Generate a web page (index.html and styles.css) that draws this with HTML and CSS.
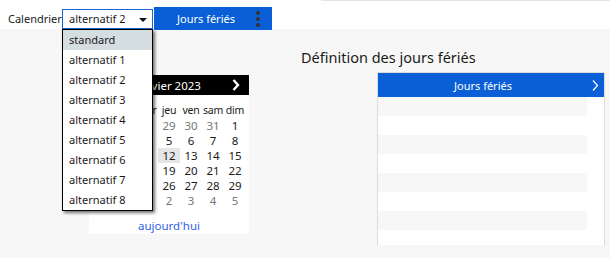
FILE: index.html
```html
<!DOCTYPE html>
<html lang="fr">
<head>
    <meta charset="UTF-8">
    <title>Jours fériés</title>
    <link rel="stylesheet" href="styles.css">
</head>
<body>
    <header class="toolbar">
        <label class="toolbar-label">Calendrier</label>
        <div class="select">
            <span class="select-value">alternatif 2</span>
            <span class="select-arrow"></span>
            <ul class="select-list">
                <li class="selected">standard</li>
                <li>alternatif 1</li>
                <li>alternatif 2</li>
                <li>alternatif 3</li>
                <li>alternatif 4</li>
                <li>alternatif 5</li>
                <li>alternatif 6</li>
                <li>alternatif 7</li>
                <li>alternatif 8</li>
            </ul>
        </div>
        <button class="toolbar-btn">
            <span class="toolbar-btn-text">Jours fériés</span>
            <span class="dots"><i></i><i></i><i></i></span>
        </button>
        <div class="toolbar-rule"></div>
    </header>

    <main class="main">
        <!-- calendrier -->
        <section class="calendar">
            <div class="calendar-head">
                <svg class="chev" width="8" height="12" viewBox="0 0 8 12"><polyline points="6.5,1 2,6 6.5,11" fill="none" stroke="#fff" stroke-width="2.4"/></svg>
                <span class="month">janvier 2023</span>
                <svg class="chev" width="8" height="12" viewBox="0 0 8 12"><polyline points="1.5,1 6,6 1.5,11" fill="none" stroke="#fff" stroke-width="2.4"/></svg>
            </div>
            <div class="calendar-grid">
                <span class="dn">lun</span><span class="dn">mar</span><span class="dn">mer</span><span class="dn">jeu</span><span class="dn">ven</span><span class="dn">sam</span><span class="dn">dim</span>
                <span class="out">26</span><span class="out">27</span><span class="out">28</span><span class="out">29</span><span class="out">30</span><span class="out">31</span><span>1</span>
                <span>2</span><span>3</span><span>4</span><span>5</span><span>6</span><span>7</span><span>8</span>
                <span>9</span><span>10</span><span>11</span><span class="today">12</span><span>13</span><span>14</span><span>15</span>
                <span>16</span><span>17</span><span>18</span><span>19</span><span>20</span><span>21</span><span>22</span>
                <span>23</span><span>24</span><span>25</span><span>26</span><span>27</span><span>28</span><span>29</span>
                <span>30</span><span>31</span><span class="out">1</span><span class="out">2</span><span class="out">3</span><span class="out">4</span><span class="out">5</span>
            </div>
            <a class="calendar-today" href="#">aujourd'hui</a>
        </section>

        <!-- définition des jours fériés -->
        <section class="holidays">
            <h1 class="holidays-title">Définition des jours fériés</h1>
            <div class="panel">
                <div class="panel-head">
                    <span>Jours fériés</span>
                    <svg class="panel-chev" width="7" height="11" viewBox="0 0 7 11"><polyline points="1,0.5 5.5,5.5 1,10.5" fill="none" stroke="#fff" stroke-width="1.2"/></svg>
                </div>
                <div class="panel-body">
                    <div class="row"></div>
                    <div class="row"></div>
                    <div class="row"></div>
                    <div class="row"></div>
                    <div class="row"></div>
                    <div class="row"></div>
                    <div class="row"></div>
                    <div class="row"></div>
                </div>
            </div>
        </section>
    </main>
</body>
</html>
```

FILE: styles.css
```css
body {
    margin: 0;
    background-color: #ffffff;
    font-family: "Noto Sans", "Open Sans", sans-serif;
    font-size: 11px;
    color: #1a1a1a;
}

/* barre du haut */
.toolbar {
    display: flex;
    align-items: flex-start;
    height: 29px;
    padding-left: 8px;
}

.toolbar-label {
    width: 54px;
    margin-top: 9px;
    line-height: 20px;
}

.select {
    position: relative;
    box-sizing: border-box;
    width: 91px;
    height: 20px;
    margin-top: 9px;
    border: 1px solid #1b62d4;
    padding-left: 6px;
    line-height: 18px;
}

.select-arrow {
    position: absolute;
    right: 5px;
    top: 8px;
    border-left: 4px solid transparent;
    border-right: 4px solid transparent;
    border-top: 4px solid #111111;
}

/* liste ouverte */
.select-list {
    position: absolute;
    left: -1px;
    top: 19px;
    z-index: 5;
    box-sizing: border-box;
    width: 91px;
    margin: 0;
    padding: 0;
    list-style: none;
    background-color: #ffffff;
    border: 1px solid #000000;
    box-shadow: 2px 2px 3px rgba(0, 0, 0, 0.55);
}

.select-list li {
    height: 20px;
    padding-left: 6px;
    line-height: 20px;
}

.select-list li.selected {
    background-color: #d4dde0;
}

.toolbar-btn {
    display: flex;
    align-items: center;
    box-sizing: border-box;
    width: 118px;
    height: 23px;
    margin: 7px 0 0 1px;
    padding: 0;
    border: none;
    background-color: #0a5fd6;
    color: #ffffff;
    font-family: inherit;
    font-size: 11px;
}

.toolbar-btn-text {
    flex: 1;
    text-align: center;
    padding-left: 2px;
}

.dots {
    display: flex;
    flex-direction: column;
    gap: 2px;
    width: 12px;
    margin-right: 4px;
}

.dots i {
    width: 4px;
    height: 4px;
    border-radius: 50%;
    background-color: #333333;
}

.toolbar-rule {
    flex: 1;
    margin-left: 49px;
    border-top: 1px solid #e5e5e5;
}

/* zone principale */
.main {
    display: flex;
    align-items: flex-start;
    height: 229px;
    padding-left: 89px;
    background-color: #f7f7f7;
}

.calendar {
    width: 160px;
    height: 159px;
    margin-top: 46px;
    background-color: #ffffff;
    text-align: center;
}

.calendar-head {
    display: flex;
    align-items: center;
    height: 20px;
    padding: 0 9px 0 7px;
    background-color: #000000;
    color: #ffffff;
    font-size: 11.5px;
}

.calendar-head .month {
    flex: 1;
}

.calendar-grid {
    display: grid;
    grid-template-columns: repeat(7, 22px);
    grid-auto-rows: 15px;
    margin: 8px 3px 0;
    line-height: 15px;
    font-size: 11.5px;
}

.calendar-grid .dn {
    font-size: 10.5px;
    letter-spacing: -0.2px;
}

.calendar-grid .out {
    color: #777777;
}

.calendar-grid .today {
    background-color: #e5e5e5;
}

.calendar-today {
    display: block;
    margin-top: 10px;
    color: #2f5fe8;
    text-decoration: none;
    line-height: 15px;
    font-size: 11.5px;
}

.holidays {
    margin-left: 52px;
}

.holidays-title {
    margin: 16px 0 3px;
    font-size: 14.5px;
    font-weight: normal;
    line-height: 24px;
    color: #1a1a1a;
}

/* tableau des jours fériés */
.panel {
    width: 228px;
    height: 173px;
    margin-left: 76px;
    box-sizing: border-box;
    border: 1px solid #dcdcdc;
    border-bottom: none;
    background-color: #ffffff;
}

.panel-head {
    display: flex;
    align-items: center;
    height: 24px;
    padding: 0 5px 0 0;
    background-color: #0a5fd6;
    color: #ffffff;
}

.panel-head span {
    flex: 1;
    text-align: center;
    padding-right: 4px;
}

.row {
    width: 209px;
    height: 19px;
}

.row:nth-child(odd) {
    background-color: #f7f7f7;
}
```
